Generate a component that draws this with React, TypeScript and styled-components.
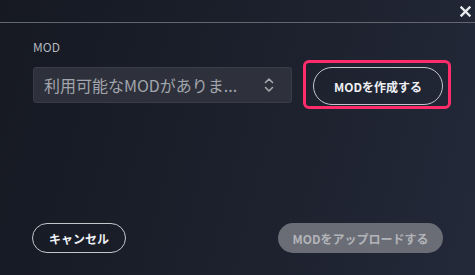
import React from "react";
import styled, { createGlobalStyle } from "styled-components";

const Global = createGlobalStyle`
  html, body { margin: 0; padding: 0; background: #1a1d27; }
  body { font-family: "Noto Sans CJK JP", "Noto Sans", sans-serif; }
  * { box-sizing: border-box; }
`;

const Dialog = styled.div`
  width: 475px;
  height: 275px;
  display: flex;
  flex-direction: column;
  background: linear-gradient(105deg, #161922 0%, #1c202c 50%, #232939 100%);
  overflow: hidden;
`;

const Header = styled.div`
  height: 23px;
  border-bottom: 1px solid #62666f;
  display: flex;
  justify-content: flex-end;
  align-items: flex-start;
  padding: 6px 4px 0 0;
`;

const CloseButton = styled.button`
  width: 11px;
  height: 11px;
  padding: 0;
  border: none;
  background: transparent;
  display: flex;
  cursor: pointer;
`;

const Body = styled.div`
  flex: 1;
  display: flex;
  flex-direction: column;
  padding: 16px 32px 22px 33px;
`;

const Label = styled.div`
  font-size: 12px;
  line-height: 16px;
  color: #b4b7bf;
  margin-bottom: 10px;
`;

const Row = styled.div`
  display: flex;
  align-items: center;
  gap: 11px;
  margin-top: -5px;
`;

const Select = styled.div`
  flex-shrink: 0;
  width: 259px;
  height: 36px;
  border-radius: 3px;
  background: #2e313b;
  border: 1px solid #3a3d48;
  display: flex;
  align-items: center;
  justify-content: space-between;
  padding: 0 17px 0 10px;
  font-size: 16px;
  color: #a2a5ac;
  white-space: nowrap;
`;

const Highlight = styled.div`
  flex-shrink: 0;
  border: 3px solid #ff2c6b;
  border-radius: 6px;
  padding: 4px 5px 1px 7px;
  display: flex;
`;

const PillButton = styled.button<{ $variant: "outline" | "disabled"; $w: number }>`
  flex-shrink: 0;
  width: ${(p) => p.$w}px;
  height: ${(p) => (p.$variant === "outline" ? 38 : 30)}px;
  border-radius: 999px;
  font-family: "Noto Sans CJK JP", "Noto Sans", sans-serif;
  font-size: 12px;
  font-weight: 700;
  padding: 0;
  display: flex;
  align-items: center;
  justify-content: center;
  border: ${(p) => (p.$variant === "outline" ? "1px solid #c4c6cc" : "none")};
  background: ${(p) => (p.$variant === "outline" ? "transparent" : "#6a6d75")};
  color: ${(p) => (p.$variant === "outline" ? "#eef0f4" : "#b2b4b9")};
`;

const Footer = styled.div`
  margin-top: auto;
  display: flex;
  justify-content: space-between;
  align-items: center;
`;

const CancelButton = styled(PillButton)`
  height: 30px;
  margin-left: -1px;
`;

export default function App() {
  return (
    <>
      <Global />
      <Dialog>
        <Header>
          <CloseButton aria-label="close">
            <svg width="11" height="11" viewBox="0 0 11 11">
              <path d="M1.5 1.5 L9.5 9.5 M9.5 1.5 L1.5 9.5" stroke="#e8e9ec" strokeWidth="2.4" strokeLinecap="square" />
            </svg>
          </CloseButton>
        </Header>
        <Body>
          <Label>MOD</Label>
          <Row>
            <Select>
              <span>利用可能なMODがありま...</span>
              <svg width="10" height="16" viewBox="0 0 10 16">
                <path d="M1.5 5.5 L5 2 L8.5 5.5 M1.5 10.5 L5 14 L8.5 10.5" stroke="#a6a8ae" strokeWidth="1.6" fill="none" strokeLinecap="round" strokeLinejoin="round" />
              </svg>
            </Select>
            <Highlight>
              <PillButton $variant="outline" $w={130}>MODを作成する</PillButton>
            </Highlight>
          </Row>
          <Footer>
            <CancelButton $variant="outline" $w={94}>キャンセル</CancelButton>
            <PillButton $variant="disabled" $w={165}>MODをアップロードする</PillButton>
          </Footer>
        </Body>
      </Dialog>
    </>
  );
}
